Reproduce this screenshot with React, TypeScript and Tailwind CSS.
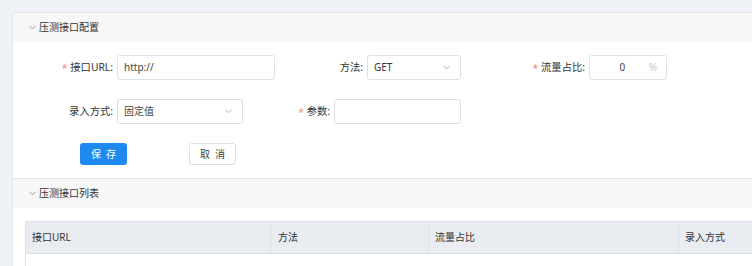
import React from "react";

const font = { fontFamily: '"Noto Sans", "Noto Sans CJK SC", sans-serif' };

function Chevron({ className = "" }: { className?: string }) {
  return (
    <svg className={className} width="7" height="5" viewBox="0 0 7 5" fill="none">
      <path d="M0.5 0.8 L3.5 3.8 L6.5 0.8" stroke="currentColor" strokeWidth="1" />
    </svg>
  );
}

function Label({ text, req, w }: { text: string; req?: boolean; w: string }) {
  return (
    <div className={`${w} flex items-center justify-end pr-[4px] text-[10.3px] text-[#333]`}>
      {req && <span className="text-[#f08a8a] mr-[3px] text-[10px] leading-none">*</span>}
      <span>{text}:</span>
    </div>
  );
}

function Header({ title }: { title: string }) {
  return (
    <div className="h-[29px] bg-[#f7f7f7] flex items-center pl-[16px] gap-[3px] text-[#333]">
      <Chevron className="text-[#999]" />
      <span className="text-[10px]">{title}</span>
    </div>
  );
}

export default function App() {
  return (
    <div style={font} className="w-[752px] h-[266px] overflow-hidden bg-[#eef1f5] pt-[12px] pl-[12px]">
      <div className="w-[800px] bg-white border border-[#e2e4e8] rounded-tl-[3px]">
        <Header title="压测接口配置" />
        <div className="pt-[13px] pb-[13px] border-b border-[#e6e6e6]">
          <div className="flex h-[25px]">
            <Label text="接口URL" req w="w-[104px]" />
            <div className="w-[158px] h-[25px] border border-[#dcdfe6] rounded-[3px] flex items-center px-[6px] text-[10px] text-[#444]">
              http://
            </div>
            <Label text="方法" w="w-[92px]" />
            <div className="w-[94px] h-[25px] border border-[#dcdfe6] rounded-[3px] flex items-center justify-between px-[6px] text-[10px] text-[#333]">
              <span>GET</span>
              <Chevron className="text-[#aaa] mr-[4px]" />
            </div>
            <Label text="流量占比" req w="w-[128px]" />
            <div className="w-[78px] h-[25px] border border-[#dcdfe6] rounded-[3px] flex items-center text-[10px]">
              <span className="flex-1 text-center text-[#444] pl-[6px]">0</span>
              <span className="text-[#c8c8c8] pr-[9px]">%</span>
            </div>
          </div>
          <div className="flex h-[25px] mt-[19px]">
            <Label text="录入方式" w="w-[104px]" />
            <div className="w-[126px] h-[25px] border border-[#dcdfe6] rounded-[3px] flex items-center justify-between px-[6px] text-[10px] text-[#444]">
              <span>固定值</span>
              <Chevron className="text-[#aaa] mr-[4px]" />
            </div>
            <Label text="参数" req w="w-[91px]" />
            <div className="w-[127px] h-[25px] border border-[#dcdfe6] rounded-[3px]" />
          </div>
          <div className="flex mt-[19px] pl-[67px]">
            <button className="w-[47px] h-[22px] bg-[#1e8af0] rounded-[3px] text-white text-[10px] tracking-[5px] pl-[5px]">
              保存
            </button>
            <button className="ml-[62px] w-[47px] h-[22px] bg-white border border-[#dcdfe6] rounded-[3px] text-[#444] text-[10px] tracking-[5px] pl-[5px]">
              取消
            </button>
          </div>
        </div>
        <Header title="压测接口列表" />
        <div className="pt-[13px] pl-[12px]">
          <div className="flex h-[33px] bg-[#e9ecf0] border border-[#dde1e7] text-[10px] text-[#333]">
            <div className="w-[245px] border-r border-[#dde1e7] flex items-center pl-[6px]">接口URL</div>
            <div className="w-[158px] border-r border-[#dde1e7] flex items-center pl-[7px]">方法</div>
            <div className="w-[250px] border-r border-[#dde1e7] flex items-center pl-[6px]">流量占比</div>
            <div className="flex-1 flex items-center pl-[6px]">录入方式</div>
          </div>
          <div className="h-[20px] border-l border-[#dde1e7]" />
        </div>
      </div>
    </div>
  );
}
